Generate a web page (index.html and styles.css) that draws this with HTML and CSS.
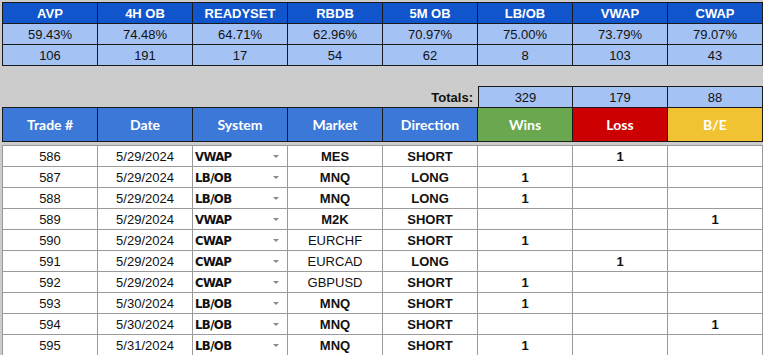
FILE: index.html
```html
<!DOCTYPE html>
<html>
<head>
<meta charset="utf-8">
<link rel="stylesheet" href="styles.css">
</head>
<body>
<div class="sheet">
  <div class="stats">
    <div class="c h">AVP</div><div class="c h">4H OB</div><div class="c h">READYSET</div><div class="c h">RBDB</div><div class="c h">5M OB</div><div class="c h">LB/OB</div><div class="c h">VWAP</div><div class="c h">CWAP</div>
    <div class="c v">59.43%</div><div class="c v">74.48%</div><div class="c v">64.71%</div><div class="c v">62.96%</div><div class="c v">70.97%</div><div class="c v">75.00%</div><div class="c v">73.79%</div><div class="c v">79.07%</div>
    <div class="c v">106</div><div class="c v">191</div><div class="c v">17</div><div class="c v">54</div><div class="c v">62</div><div class="c v">8</div><div class="c v">103</div><div class="c v">43</div>
  </div>

  <div class="totals">
    <div class="tlabel">Totals:</div>
    <div class="tcell first">329</div>
    <div class="tcell">179</div>
    <div class="tcell">88</div>
  </div>

  <div class="thead">
    <div class="th">Trade #</div>
    <div class="th">Date</div>
    <div class="th">System</div>
    <div class="th">Market</div>
    <div class="th">Direction</div>
    <div class="th win">Wins</div>
    <div class="th loss">Loss</div>
    <div class="th be">B/E</div>
  </div>

  <div class="rows">
    <div class="d">586</div><div class="d">5/29/2024</div><div class="d sys">VWAP<span class="arrow"></span></div><div class="d b">MES</div><div class="d b">SHORT</div><div class="d b"></div><div class="d b">1</div><div class="d b"></div>
    <div class="d">587</div><div class="d">5/29/2024</div><div class="d sys">LB/OB<span class="arrow"></span></div><div class="d b">MNQ</div><div class="d b">LONG</div><div class="d b">1</div><div class="d b"></div><div class="d b"></div>
    <div class="d">588</div><div class="d">5/29/2024</div><div class="d sys">LB/OB<span class="arrow"></span></div><div class="d b">MNQ</div><div class="d b">LONG</div><div class="d b">1</div><div class="d b"></div><div class="d b"></div>
    <div class="d">589</div><div class="d">5/29/2024</div><div class="d sys">VWAP<span class="arrow"></span></div><div class="d b">M2K</div><div class="d b">SHORT</div><div class="d b"></div><div class="d b"></div><div class="d b">1</div>
    <div class="d">590</div><div class="d">5/29/2024</div><div class="d sys">CWAP<span class="arrow"></span></div><div class="d">EURCHF</div><div class="d b">SHORT</div><div class="d b">1</div><div class="d b"></div><div class="d b"></div>
    <div class="d">591</div><div class="d">5/29/2024</div><div class="d sys">CWAP<span class="arrow"></span></div><div class="d">EURCAD</div><div class="d b">LONG</div><div class="d b"></div><div class="d b">1</div><div class="d b"></div>
    <div class="d">592</div><div class="d">5/29/2024</div><div class="d sys">CWAP<span class="arrow"></span></div><div class="d">GBPUSD</div><div class="d b">SHORT</div><div class="d b">1</div><div class="d b"></div><div class="d b"></div>
    <div class="d">593</div><div class="d">5/30/2024</div><div class="d sys">LB/OB<span class="arrow"></span></div><div class="d b">MNQ</div><div class="d b">SHORT</div><div class="d b">1</div><div class="d b"></div><div class="d b"></div>
    <div class="d">594</div><div class="d">5/30/2024</div><div class="d sys">LB/OB<span class="arrow"></span></div><div class="d b">MNQ</div><div class="d b">SHORT</div><div class="d b"></div><div class="d b"></div><div class="d b">1</div>
    <div class="d">595</div><div class="d">5/31/2024</div><div class="d sys">LB/OB<span class="arrow"></span></div><div class="d b">MNQ</div><div class="d b">SHORT</div><div class="d b">1</div><div class="d b"></div><div class="d b"></div>
  </div>
</div>
</body>
</html>
```

FILE: styles.css
```css
html, body {
  margin: 0;
  padding: 0;
  background: #cccccc;
  width: 763px;
  height: 355px;
  overflow: hidden;
}
.sheet {
  padding: 2px 0 0 2px;
  font-family: "Liberation Sans", Arial, sans-serif;
  font-size: 13px;
  color: #111111;
}
.stats {
  display: grid;
  grid-template-columns: repeat(8, 95px);
  grid-auto-rows: 21px;
  width: max-content;
  border-left: 1px solid #1a1a1a;
  border-top: 1px solid #1a1a1a;
}
.c {
  border-right: 1px solid #1a1a1a;
  border-bottom: 1px solid #1a1a1a;
  display: flex;
  align-items: center;
  justify-content: center;
  line-height: 1;
  padding-top: 1px;
  box-sizing: border-box;
}
.h {
  background: #1155cc;
  color: #ffffff;
  font-weight: bold;
}
.v {
  background: #a4c2f4;
}
.totals {
  display: grid;
  grid-template-columns: 476px 95px 95px 95px;
  margin-top: 20px;
  height: 21px;
}
.tlabel {
  display: flex;
  align-items: center;
  justify-content: flex-end;
  padding-right: 5px;
  padding-top: 2px;
  font-weight: bold;
}
.tcell {
  background: #a4c2f4;
  border-top: 1px solid #1a1a1a;
  border-right: 1px solid #1a1a1a;
  display: flex;
  align-items: center;
  justify-content: center;
  padding-top: 1px;
}
.tcell.first {
  border-left: 1px solid #1a1a1a;
}
.thead {
  display: grid;
  grid-template-columns: repeat(8, 95px);
  width: max-content;
  border-left: 1px solid #1a1a1a;
  border-top: 1px solid #1a1a1a;
  border-bottom: 1px solid #1a1a1a;
}
.th {
  height: 33px;
  border-right: 1px solid #1a1a1a;
  background: #3c78d8;
  color: #ffffff;
  font-family: Lato, "Open Sans", sans-serif;
  font-weight: bold;
  font-size: 14px;
  display: flex;
  align-items: center;
  justify-content: center;
}
.th.win { background: #6aa84f; }
.th.loss { background: #cc0000; }
.th.be { background: #f1c232; }
.rows {
  margin-top: 3px;
  display: grid;
  grid-template-columns: repeat(8, 95px);
  grid-auto-rows: 21px;
  width: max-content;
  background: #ffffff;
  border-left: 1px solid #9a9a9a;
  border-top: 1px solid #9a9a9a;
}
.d {
  border-right: 1px solid #9a9a9a;
  border-bottom: 1px solid #9a9a9a;
  display: flex;
  align-items: center;
  justify-content: center;
  padding-top: 0;
  box-sizing: border-box;
  color: #111111;
}
.d.b { font-weight: bold; }
.d.sys {
  justify-content: space-between;
  padding-left: 2px;
  padding-right: 8px;
  font-family: "DejaVu Sans", sans-serif;
  font-stretch: condensed;
  font-weight: bold;
  font-size: 13px;
  letter-spacing: -0.6px;
}
.arrow {
  width: 0;
  height: 0;
  border-left: 3px solid transparent;
  border-right: 3px solid transparent;
  border-top: 3px solid #8a8a8a;
  margin-top: 1px;
}
```
